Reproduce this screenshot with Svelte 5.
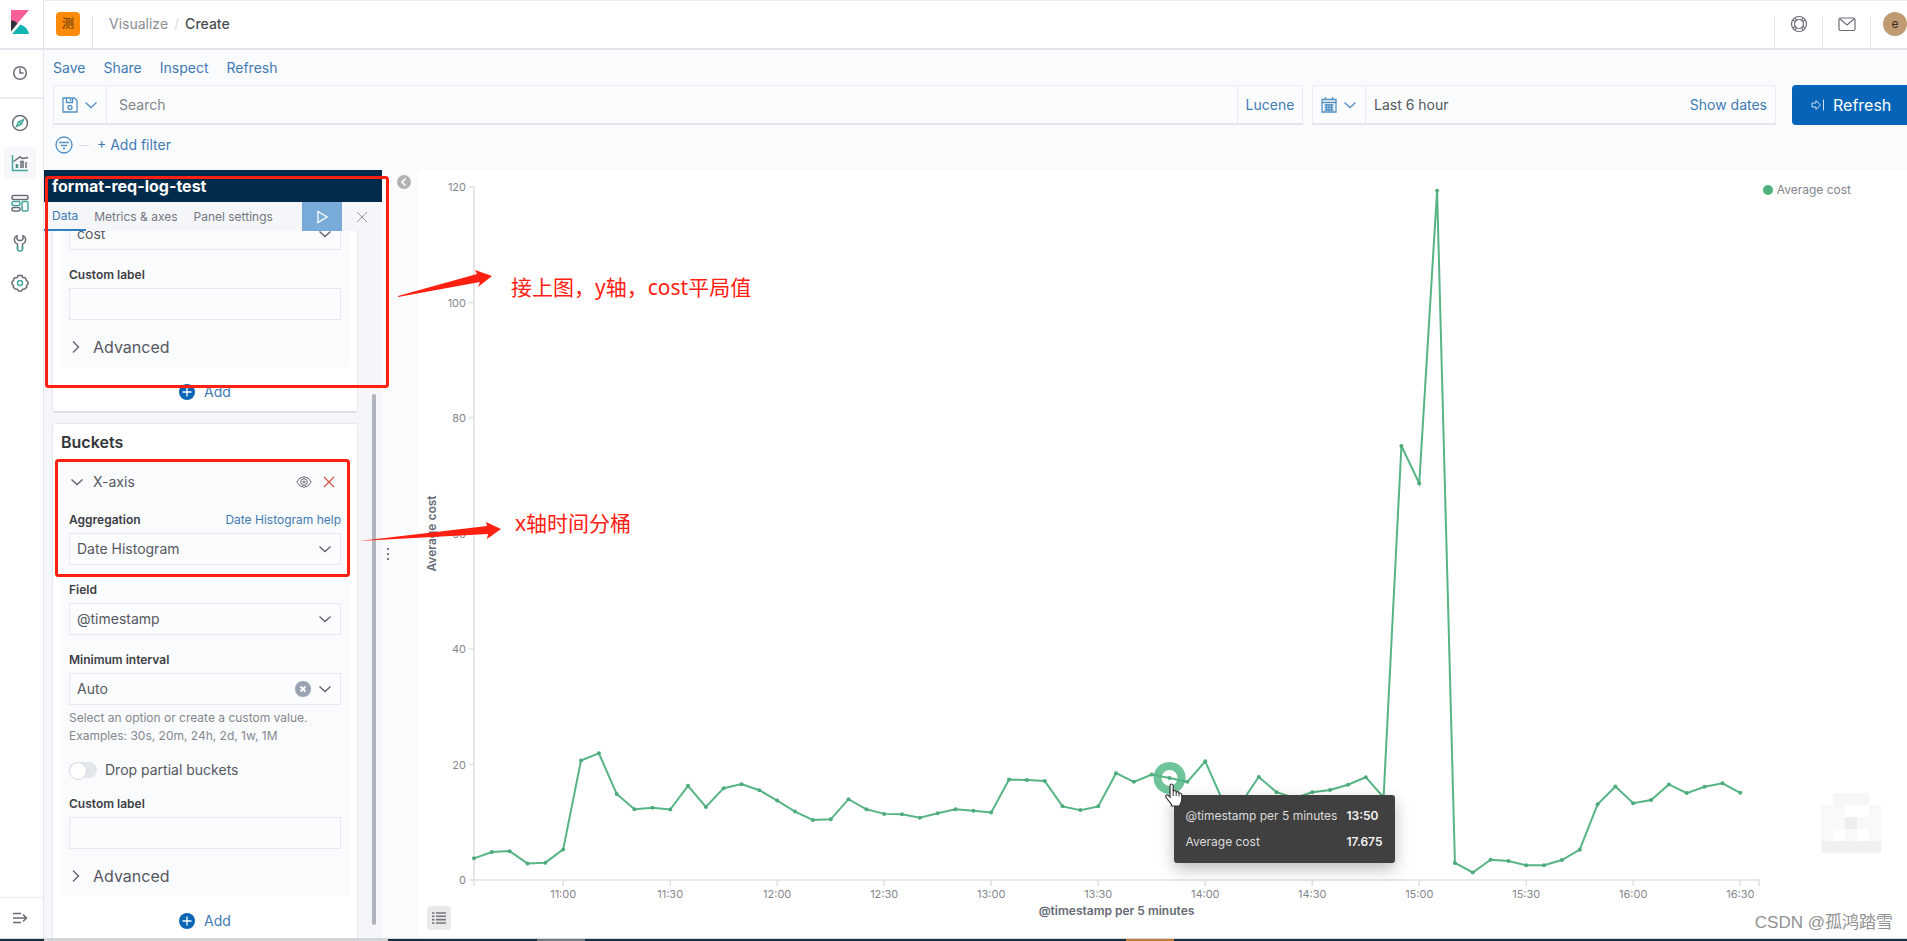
<script>
    const values = [
        3.75, 4.85, 5, 2.85, 3, 5.3, 20.7, 21.95, 14.9, 12.25, 12.5, 12.2,
        16.3, 12.65, 15.9, 16.6, 15.55, 13.75, 11.85, 10.4, 10.5, 14, 12.25,
        11.45, 11.4, 10.8, 11.55, 12.25, 12, 11.7, 17.4, 17.3, 17.15, 12.75,
        12.1, 12.75, 18.5, 17, 18.25, 17.675, 17, 20.55, 13.6, 13.3, 17.85,
        15.2, 14.2, 15.2, 15.6, 16.5, 17.8, 14.3, 75.15, 68.7, 119.35, 2.95,
        1.3, 3.5, 3.3, 2.55, 2.55, 3.45, 5.25, 13.1, 16.2, 13.3, 13.85, 16.55,
        15.05, 16.15, 16.75, 15.1
    ];
    const times = [
        '11:00', '11:30', '12:00', '12:30', '13:00', '13:30',
        '14:00', '14:30', '15:00', '15:30', '16:00', '16:30'
    ];
    const yTicks = [0, 20, 40, 60, 80, 100, 120];
    const hovered = 39;
    const left = 56;
    const top = 17;

    let width = 1489;
    let height = 768;
    let tab = 'Data';
    let search = '';
    let dropPartial = false;

    $: right = width - 148;
    $: bottom = height - 58;
    $: step = (right - left) / (values.length + 0.05);
    $: x = (i) => left + i * step;
    $: y = (v) => bottom - (v / 120) * (bottom - top);
    $: line = values.map((v, i) => `${x(i)},${y(v)}`).join(' ');
</script>

{#snippet chevron()}
    <svg class="chevron" width="14" height="14" viewBox="0 0 14 14"><path d="M1.5 4.5 7 9.5l5.5-5" /></svg>
{/snippet}

{#snippet arrowRight()}
    <svg class="chevron" width="14" height="14" viewBox="0 0 14 14"><path d="M4 1.5 9.5 7 4 12.500" /></svg>
{/snippet}

{#snippet addButton()}
    <button class="add">
        <svg width="16" height="16" viewBox="0 0 16 16">
            <circle cx="8" cy="8" r="8" fill="#0a66b5" />
            <path d="M8 3.500v9M3.500 8h9" stroke="#fff" stroke-width="1.300" />
        </svg>
        Add
    </button>
{/snippet}

<div class="page">
    <nav class="rail" aria-label="Main">
        <a class="logo" href="#home" aria-label="Kibana">
            <svg width="18" height="24" viewBox="0 0 18 24">
                <path d="M0 0h18L5.500 14.500A14 14 0 0 0 0 10z" fill="#fa5f99" />
                <path d="M0 10a14 14 0 0 1 6.500 3.500L0 21.500z" fill="#32323c" />
                <path d="M1 24 9.500 14.500A13 13 0 0 1 18 24z" fill="#10b5b1" />
            </svg>
        </a>
        <a class="recent" href="#recent" aria-label="Recently viewed">
            <svg width="16" height="16" viewBox="0 0 16 16"><circle cx="8" cy="8" r="6.300" /><path d="M8 3.500V8h3.500" /></svg>
        </a>
        <div class="apps">
            <a href="#discover" aria-label="Discover">
                <svg width="18" height="18" viewBox="0 0 18 18"><circle cx="9" cy="9" r="7.500" /><path class="teal" d="M12.500 5.500 10.500 10 5.500 12.500 7.500 8z" /><path class="teal" d="m7.500 8 3 2" /></svg>
            </a>
            <a class="current" href="#visualize" aria-label="Visualize">
                <svg width="18" height="18" viewBox="0 0 18 18"><path class="teal" d="M1.500 1v15.500H17" /><path d="M2.500 7.500 9 3l2.500 1.500L17 3.500M5.500 14v-4M10 14V7.500h2V14M15 14V8" /><path class="teal" d="M6.500 14v-3.500" /></svg>
            </a>
            <a href="#dashboard" aria-label="Dashboard">
                <svg width="18" height="18" viewBox="0 0 18 18"><rect x="1" y="1.500" width="16" height="4" rx="1.500" /><rect class="teal" x="1" y="7.500" width="8" height="4" rx="1.500" /><rect x="1" y="13.500" width="8" height="3.500" rx="1.500" /><rect class="teal" x="11" y="7.500" width="6" height="9.500" rx="1.500" /></svg>
            </a>
            <a href="#devtools" aria-label="Dev Tools">
                <svg width="18" height="18" viewBox="0 0 18 18"><path d="M6.500 15.500V10C4 9 3 7 3.500 4.500 4 3 5 2 6 1.700V5l1.500 1.500h3L12 5V1.700c1 .3 2 1.300 2.500 2.800C15 7 14 9 11.500 10v5.500" /><path class="teal" d="M6.500 12v3q0 2 2.500 2t2.500-2v-3" /></svg>
            </a>
            <a href="#management" aria-label="Management">
                <svg width="18" height="18" viewBox="0 0 18 18"><path d="m7 1.500h4l.5 2 1.500 0 1.500.5 1 2.500L17 8v2l-1.500 1.500.2 1.500-1.700 2-2.500.2L10.500 17h-3L6.500 15.200 4 15l-1.700-2 .2-1.500L1 10V8l1.500-1.500.5-2 1-.8 2.500-.2z" /><circle class="teal" cx="9" cy="9" r="2.500" /></svg>
            </a>
        </div>
        <button class="collapse" aria-label="Expand navigation">
            <svg width="16" height="14" viewBox="0 0 16 14"><path d="M1 2.500h8M1 7h13M1 11.500h8M11 3.500 14.500 7 11 10.500" /></svg>
        </button>
    </nav>

    <div class="main">
        <header>
            <div class="space"><span>测</span></div>
            <div class="crumbs"><a href="#visualize">Visualize</a><i>/</i><b>Create</b></div>
            <button class="head-icon" aria-label="Help">
                <svg width="18" height="18" viewBox="0 0 18 18"><circle cx="9" cy="9" r="7.500" /><circle cx="9" cy="9" r="4.500" /><path d="m3 5 3 2M5 3l2 3M15 5l-3 2M13 3l-2 3M3 13l3-2M5 15l2-3M15 13l-3-2M13 15l-2-3" /></svg>
            </button>
            <button class="head-icon" aria-label="News">
                <svg width="18" height="18" viewBox="0 0 18 18"><rect x="1" y="3" width="16" height="12.500" rx="1.500" /><path d="m2 4 7 6 7-6" /></svg>
            </button>
            <button class="head-icon user" aria-label="Account"><span>e</span></button>
        </header>

        <div class="top">
            <div class="menu">
                <a href="#save">Save</a>
                <a href="#share">Share</a>
                <a href="#inspect">Inspect</a>
                <a href="#refresh">Refresh</a>
            </div>
            <div class="query">
                <div class="box grow">
                    <button class="pick" aria-label="Saved queries">
                        <svg width="16" height="16" viewBox="0 0 16 16"><path d="M1 1h11.500L15 3.500V15H1zM4.500 1v4.500h6V1M8.500 2v2" /><circle cx="8" cy="10.500" r="2" /></svg>
                        {@render chevron()}
                    </button>
                    <input class="search" aria-label="Search" placeholder="Search" bind:value={search} />
                    <button class="lang">Lucene</button>
                </div>
                <div class="box date">
                    <button class="pick" aria-label="Quick dates">
                        <svg width="16" height="16" viewBox="0 0 16 16"><path d="M1 2.500h14V15H1zM1 5.500h14M4.500 0v3M11.500 0v3M3.500 8h9M3.500 10.500h9M3.500 13h9M5.500 7v7M8 7v7M10.500 7v7" /></svg>
                        {@render chevron()}
                    </button>
                    <button class="range">Last 6 hour</button>
                    <button class="dates">Show dates</button>
                </div>
                <button class="refresh">
                    <svg width="14" height="14" viewBox="0 0 14 14"><path d="M1 5h4V2.500L9.500 7 5 11.500V9H1zM12.500 1.500v11" /></svg>
                    Refresh
                </button>
            </div>
            <div class="filters">
                <svg width="18" height="18" viewBox="0 0 18 18"><circle cx="9" cy="9" r="8" /><path d="M4 6.500h10M6 9.500h6M8 12.500h2" /></svg>
                <span class="dash"></span>
                <button>+ Add filter</button>
            </div>
        </div>

        <div class="work">
            <aside>
                <h2>format-req-log-test</h2>
                <div class="tabs">
                    {#each ['Data', 'Metrics & axes', 'Panel settings'] as name}
                        <button class:active={tab == name} on:click={() => (tab = name)}>{name}</button>
                    {/each}
                    <button class="apply" aria-label="Apply changes">
                        <svg width="14" height="14" viewBox="0 0 14 14"><path d="M3 1.500 12 7l-9 5.500z" /></svg>
                    </button>
                    <button class="discard" aria-label="Discard changes">
                        <svg width="12" height="12" viewBox="0 0 12 12"><path d="m1 1 10 10M11 1 1 11" /></svg>
                    </button>
                </div>

                <div class="scroller">
                    <div class="cards">
                        <div class="card">
                            <div class="agg">
                                <div class="select">
                                    <select aria-label="Metric field"><option>cost</option></select>
                                    {@render chevron()}
                                </div>
                                <label for="metric-label">Custom label</label>
                                <input id="metric-label" class="text" />
                                <button class="advanced">{@render arrowRight()}Advanced</button>
                            </div>
                            {@render addButton()}
                        </div>

                        <div class="card">
                            <h3>Buckets</h3>
                            <div class="agg">
                                <div class="agg-head">
                                    <button class="axis">{@render chevron()}X-axis</button>
                                    <button aria-label="Disable aggregation">
                                        <svg class="eye" width="16" height="14" viewBox="0 0 16 14"><path d="M.8 7Q3.500 1.800 8 1.800T15.200 7Q12.500 12.200 8 12.200T.8 7z" /><circle cx="8" cy="7" r="3.300" /><circle cx="8" cy="7" r="1" /></svg>
                                    </button>
                                    <button aria-label="Remove aggregation">
                                        <svg class="remove" width="12" height="12" viewBox="0 0 12 12"><path d="m1 1 10 10M11 1 1 11" /></svg>
                                    </button>
                                </div>
                                <div class="label-row">
                                    <label for="agg">Aggregation</label>
                                    <a href="#help">Date Histogram help</a>
                                </div>
                                <div class="select">
                                    <select id="agg"><option>Date Histogram</option></select>
                                    {@render chevron()}
                                </div>
                                <label for="field">Field</label>
                                <div class="select">
                                    <select id="field"><option>@timestamp</option></select>
                                    {@render chevron()}
                                </div>
                                <label for="interval">Minimum interval</label>
                                <div class="select">
                                    <select id="interval"><option>Auto</option></select>
                                    <button class="clear" aria-label="Clear interval">
                                        <svg width="16" height="16" viewBox="0 0 16 16"><circle cx="8" cy="8" r="8" fill="#98a2b3" /><path d="m5.500 5.500 5 5m0-5-5 5" stroke="#fff" stroke-width="1.800" /></svg>
                                    </button>
                                    {@render chevron()}
                                </div>
                                <p>Select an option or create a custom value.<br />Examples: 30s, 20m, 24h, 2d, 1w, 1M</p>
                                <label class="switch">
                                    <input type="checkbox" bind:checked={dropPartial} />
                                    Drop partial buckets
                                </label>
                                <label for="bucket-label">Custom label</label>
                                <input id="bucket-label" class="text" />
                                <button class="advanced">{@render arrowRight()}Advanced</button>
                            </div>
                            {@render addButton()}
                        </div>
                    </div>
                    <div class="thumb"></div>
                </div>
            </aside>

            <div class="gutter">
                <button aria-label="Hide editor">
                    <svg width="14" height="14" viewBox="0 0 14 14"><circle cx="7" cy="7" r="7" fill="#b3b3b6" /><path d="M8.500 3.500 5 7l3.500 3.500" fill="none" stroke="#fff" stroke-width="1.600" /></svg>
                </button>
                <span class="grip"></span>
            </div>

            <div class="chart" bind:clientWidth={width} bind:clientHeight={height}>
                <svg class="plot" {width} {height}>
                    <g class="axes">
                        <path d="M{left} {top}V{bottom + 6}M{left} {bottom}H{right}v6" />
                        {#each yTicks as t}
                            <path d="M{left - 5} {y(t)}h5" />
                            <text x={left - 8} y={y(t) + 4} text-anchor="end">{t}</text>
                        {/each}
                        {#each times as t, i}
                            <path d="M{x(5 + i * 6)} {bottom}v6" />
                            <text x={x(5 + i * 6)} y={bottom + 18} text-anchor="middle">{t}</text>
                        {/each}
                    </g>
                    <text class="title" x={(left + right) / 2} y={bottom + 35}>@timestamp per 5 minutes</text>
                    <text class="title" transform="translate(18 {(top + bottom) / 2}) rotate(-90)">Average cost</text>
                    <circle class="halo" cx={x(hovered)} cy={y(values[hovered])} r="12" />
                    <polyline points={line} />
                    {#each values as v, i}
                        <circle class="dot" cx={x(i)} cy={y(v)} r="2" />
                    {/each}
                </svg>

                <div class="legend"><span></span>Average cost</div>
                <button class="list" aria-label="Toggle legend">
                    <svg width="14" height="14" viewBox="0 0 14 14"><path d="M0 2h2.500M0 5.300h2.500M0 8.600h2.500M0 12h2.500M4 2h10M4 5.300h10M4 8.600h10M4 12h10" /></svg>
                </button>

                <div class="tip" style="left: {x(hovered) + 4}px; top: {y(values[hovered]) + 17}px">
                    <table>
                        <tbody>
                            <tr><td>@timestamp per 5 minutes</td><th>13:50</th></tr>
                            <tr><td>Average cost</td><th>17.675</th></tr>
                        </tbody>
                    </table>
                </div>
                <svg class="hand" style="left: {x(hovered) - 6}px; top: {y(values[hovered]) + 5}px" width="20" height="24" viewBox="0 0 20 24">
                    <path d="M6 14V3q0-2 1.500-2T9.200 3v6q.2-1.500 1.500-1.500T12.200 9v1q.2-1.300 1.400-1.300T15 10v1q.2-1 1.300-1 1.500 0 1.500 2v4q0 3-1.800 5.500V23H7.500v-1.500L2.500 15Q1 13 2.300 12.200q1.500-.7 2.700.8z" fill="#fff" stroke="#333" stroke-width="1.200" />
                    <path d="M9.200 9v4M12.200 10v3M15 11v2.500" stroke="#333" />
                </svg>

                <svg class="mosaic" width="60" height="60" viewBox="0 0 5 5" shape-rendering="crispEdges">
                    <path d="M0 1h5v4H0z" fill="#f9f9f9" />
                    <path d="M1 0h3v1H1z" fill="#f7f7f7" />
                    <path d="M2 1h2v1H2zM1 3h1v1H1zM3 3h1v1H3z" fill="#fff" />
                    <path d="M2 2h1v1H2z" fill="#eee" />
                    <path d="M0 4h5v1H0z" fill="#f1f1f1" />
                </svg>
                <div class="credit">CSDN @孤鸿踏雪</div>
            </div>
        </div>
    </div>

    <footer><span class="edge"></span><span class="app"></span><span class="alert"></span></footer>

    <svg class="marks">
        <rect x="46.500" y="177.500" width="341" height="209" rx="2" />
        <rect x="56.500" y="460.500" width="292" height="115" rx="2" />
        <path d="m398 296 79-22-2-4 17 6-14 11 2-5-82 15z" />
        <path d="m359 541 128-15-1-4 15 7-14 10 1-5z" />
    </svg>
    <div class="note one">接上图，y轴，cost平局值</div>
    <div class="note two">x轴时间分桶</div>
</div>

<style>
    :global(body) {
        overflow: hidden;
    }

    .page {
        position: relative;
        display: grid;
        grid-template: minmax(0, 1fr) 3px / 44px minmax(0, 1fr);
        height: 100vh;
        overflow: hidden;
        background: #fafbfd;
        color: #55585f;
        font: 14px/20px Inter, "Noto Sans CJK SC", sans-serif;
    }

    .page :global(*) {
        box-sizing: border-box;
    }

    button,
    input,
    select {
        margin: 0;
        padding: 0;
        border: 0;
        background: none;
        color: inherit;
        font: inherit;
    }

    button {
        cursor: pointer;
    }

    a {
        color: #3f7ab3;
        text-decoration: none;
    }

    svg {
        display: block;
        flex: none;
        fill: none;
        stroke: none;
    }

    .rail {
        display: flex;
        flex-direction: column;
        border-right: 1px solid #e3e6ec;
        background: #fff;
    }

    .rail a,
    .collapse {
        display: flex;
        align-items: center;
        justify-content: center;
        width: 32px;
        height: 32px;
    }

    .rail a:not(.logo) svg,
    .collapse svg,
    .head-icon svg {
        stroke: #6a6d75;
        stroke-width: 1.5;
    }

    .rail a .teal {
        stroke: #45a69e;
    }

    .rail .logo {
        width: 43px;
        height: 50px;
        padding-right: 3px;
        padding-bottom: 4px;
        border-bottom: 2px solid #e3e6ec;
    }

    .rail .recent {
        width: 43px;
        height: 49px;
        padding-right: 4px;
        padding-bottom: 2px;
        border-bottom: 2px solid #e8ebf0;
    }

    .apps {
        display: flex;
        flex: 1;
        flex-direction: column;
        gap: 8px;
        padding: 8px 4px;
    }

    .apps .current {
        border-radius: 4px;
        background: #f5f7fa;
    }

    .collapse {
        width: 43px;
        height: 41px;
        padding-right: 3px;
        border-top: 1px solid #e9ebef;
    }

    .main {
        display: flex;
        flex-direction: column;
        min-width: 0;
    }

    header {
        display: flex;
        align-items: flex-end;
        height: 50px;
        border-top: 1px solid #eee;
        border-bottom: 2px solid #dfe2e8;
        background: #fff;
    }

    .space,
    .head-icon {
        display: flex;
        justify-content: center;
        width: 48px;
        height: 32px;
        border-right: 1px solid #e3e6ec;
    }

    .space {
        width: 49px;
    }

    .space span,
    .user span {
        width: 24px;
        height: 24px;
        margin-top: -4px;
        border-radius: 4px;
        background: #fd8b0b;
        color: #5a3205;
        font-size: 12px;
        line-height: 24px;
        text-align: center;
    }

    .crumbs {
        display: flex;
        flex: 1;
        gap: 6px;
        height: 34px;
        padding-left: 16px;
        color: #8b8d93;
    }

    .crumbs a {
        color: inherit;
    }

    .crumbs i {
        color: #dadce0;
        font-style: normal;
    }

    .crumbs b {
        color: #4b4d52;
        font-weight: 500;
    }

    .head-icon {
        border-right: 0;
        border-left: 1px solid #e3e6ec;
    }

    .head-icon svg {
        margin-top: -1px;
        stroke-width: 1.2;
    }

    .head-icon.user {
        width: 37px;
        justify-content: flex-end;
    }

    .user span {
        border-radius: 50%;
        background: #bf9a72;
        color: #3b2c1e;
    }

    .top {
        padding: 8px 0 0 9px;
    }

    .menu {
        display: flex;
        gap: 18px;
    }

    .query {
        display: flex;
        height: 40px;
        margin-top: 7px;
    }

    .box {
        display: flex;
        border: 1px solid #e9ecf1;
        border-bottom: 2px solid #e2e5ea;
        background: #fbfcfd;
    }

    .grow {
        flex: 1;
        margin-right: 9px;
    }

    .pick {
        display: flex;
        align-items: center;
        justify-content: center;
        gap: 6px;
        width: 53px;
        border-right: 1px solid #e6e9ef;
    }

    .pick svg {
        stroke: #5290c4;
        stroke-width: 1.3;
    }

    .search {
        flex: 1;
        min-width: 0;
        padding: 0 12px;
        outline: none;
    }

    .search::placeholder {
        color: #828489;
        opacity: 1;
    }

    .lang {
        width: 65px;
        border-left: 1px solid #e6e9ef;
        color: #3f7ab3;
    }

    .date {
        width: 464px;
        margin-right: 16px;
    }

    .range {
        flex: 1;
        padding-left: 8px;
        text-align: left;
    }

    .dates {
        padding-right: 8px;
        color: #3f7ab3;
    }

    .refresh {
        display: flex;
        align-items: center;
        gap: 8px;
        width: 115px;
        padding-left: 19px;
        border-radius: 4px 0 0 4px;
        background: #0664b8;
        color: #fff;
        font-size: 16px;
    }

    .refresh svg {
        stroke: #cfe1f2;
    }

    .filters {
        display: flex;
        align-items: center;
        height: 40px;
        padding-left: 2px;
        color: #3f7ab3;
    }

    .filters svg {
        stroke: #5290c4;
        stroke-width: 1.3;
    }

    .dash {
        width: 10px;
        margin: 0 8px 0 6px;
        border-top: 1px solid #d8dce3;
    }

    .work {
        display: flex;
        flex: 1;
        min-height: 0;
        margin-top: 5px;
    }

    aside {
        display: flex;
        flex-direction: column;
        width: 338px;
        background: #f4f6fa;
    }

    h2 {
        height: 32px;
        margin: 0;
        padding-left: 8px;
        background: #022a4a;
        color: #fff;
        font-size: 16px;
        font-weight: 700;
        line-height: 32px;
    }

    .tabs {
        display: flex;
        height: 29px;
        color: #75777e;
        font-size: 12px;
    }

    .tabs button {
        padding: 0 8px;
    }

    .tabs .active {
        border-bottom: 2px solid #2f7fc1;
        color: #3f7ab3;
    }

    .tabs .apply {
        display: flex;
        align-items: center;
        justify-content: center;
        width: 40px;
        margin-left: auto;
        background: #79abd9;
    }

    .apply svg {
        stroke: #fff;
        stroke-width: 1.3;
    }

    .tabs .discard {
        padding: 0 14px;
    }

    .discard svg {
        stroke: #999ba2;
    }

    .scroller {
        position: relative;
        flex: 1;
        min-height: 0;
        padding: 0 24px 0 8px;
        overflow: hidden;
    }

    /* the list is scrolled part of the way into the first card */
    .cards {
        margin-top: -26px;
    }

    .thumb {
        position: absolute;
        top: 23%;
        right: 6px;
        bottom: 13px;
        width: 4px;
        border-radius: 2px;
        background: #b1b3bc;
    }

    .card {
        margin-bottom: 10px;
        padding: 0 8px 5px;
        border: 1px solid #e6e9ef;
        border-bottom: 2px solid #dde0e7;
        border-radius: 4px;
        background: #fff;
    }

    h3 {
        margin: 0;
        padding: 8px 0;
        color: #33353b;
        font-size: 16px;
        font-weight: 600;
    }

    .agg {
        padding: 8px;
        background: #fafbfd;
    }

    .agg-head {
        display: flex;
        align-items: center;
        gap: 11px;
        height: 27px;
        padding-right: 6px;
    }

    .axis {
        display: flex;
        flex: 1;
        align-items: center;
        gap: 9px;
        padding-left: 1px;
    }

    .chevron {
        stroke: #62656c;
        stroke-width: 1.4;
    }

    .pick .chevron {
        stroke: #5290c4;
    }

    .eye {
        stroke: #62656c;
    }

    .remove {
        stroke: #cf5449;
        stroke-width: 1.2;
    }

    .agg label:not(.switch) {
        display: block;
        margin-top: 16px;
        color: #3c3e45;
        font-size: 12px;
        font-weight: 600;
        line-height: 18px;
    }

    .label-row {
        display: flex;
        align-items: flex-end;
        justify-content: space-between;
        font-size: 12px;
        line-height: 18px;
    }

    .select {
        position: relative;
        display: flex;
        align-items: center;
        height: 32px;
        margin-top: 4px;
        border: 1px solid #e6e9ee;
        background: #fbfcfd;
    }

    select {
        flex: 1;
        height: 30px;
        padding-left: 7px;
        appearance: none;
    }

    .select > .chevron {
        position: absolute;
        right: 8px;
        pointer-events: none;
    }

    .clear {
        position: absolute;
        right: 29px;
    }

    .text {
        display: block;
        width: 100%;
        height: 32px;
        margin-top: 4px;
        padding: 0 8px;
        border: 1px solid #e6e9ee;
        background: #fbfcfd;
    }

    p {
        margin: 4px 0 0;
        color: #85878e;
        font-size: 12px;
        line-height: 18px;
    }

    .switch {
        display: flex;
        align-items: center;
        gap: 8px;
        margin-top: 16px;
        line-height: 18px;
    }

    .switch input {
        width: 28px;
        height: 16px;
        border-radius: 8px;
        appearance: none;
        background: #e3e6eb;
    }

    .switch input::before {
        content: "";
        display: block;
        width: 16px;
        height: 16px;
        border: 1px solid #d5d8df;
        border-radius: 50%;
        background: #fff;
    }

    .switch input:checked::before {
        margin-left: 12px;
    }

    .advanced {
        display: flex;
        align-items: center;
        gap: 10px;
        height: 24px;
        margin-top: 15px;
        font-size: 16px;
    }

    .add {
        display: flex;
        align-items: center;
        gap: 9px;
        margin: 15px auto 0;
        padding-bottom: 4px;
        color: #3f7ab3;
    }

    .gutter {
        display: grid;
        grid-template: auto 1fr / 1fr;
        width: 36px;
        padding: 5px 7px 20px 5px;
    }

    .gutter button {
        justify-self: end;
    }

    .grip {
        align-self: center;
        width: 2px;
        height: 12px;
        background: repeating-linear-gradient(#777a82 0 2px, transparent 2px 5px);
    }

    .chart {
        position: relative;
        flex: 1;
        min-width: 0;
        background: #fff;
    }

    .plot {
        position: absolute;
    }

    .axes {
        fill: #85878e;
        font-size: 11px;
    }

    .axes path {
        fill: none;
        stroke: #dfe0e3;
        stroke-width: 1.5;
    }

    .title {
        fill: #666a76;
        font-size: 12px;
        font-weight: 600;
        text-anchor: middle;
    }

    polyline {
        stroke: #57b585;
        stroke-width: 2;
    }

    .dot {
        fill: #4fab7b;
    }

    .halo {
        stroke: #6fc499;
        stroke-width: 8;
    }

    .legend {
        position: absolute;
        top: 10px;
        right: 56px;
        display: flex;
        align-items: center;
        gap: 4px;
        color: #82848b;
        font-size: 12px;
    }

    .legend span {
        width: 10px;
        height: 10px;
        border-radius: 50%;
        background: #4fb27e;
    }

    .list {
        position: absolute;
        bottom: 8px;
        left: 9px;
        display: flex;
        align-items: center;
        justify-content: center;
        width: 24px;
        height: 24px;
        border-radius: 3px;
        background: #eaeaeb;
    }

    .list svg {
        stroke: #74777d;
        stroke-width: 1.6;
    }

    .tip {
        position: absolute;
        padding: 8px 11px 8px 10px;
        border-radius: 3px;
        background: #404040;
        box-shadow: 0 6px 16px #0004;
        color: #dcdcdc;
        font-size: 12px;
        white-space: nowrap;
    }

    table {
        border-spacing: 0;
    }

    td,
    th {
        height: 26px;
        padding: 0 2px;
        text-align: left;
    }

    th {
        padding-left: 7px;
        color: #f3f3f3;
        font-weight: 600;
    }

    .hand {
        position: absolute;
    }

    .mosaic {
        position: absolute;
        right: 26px;
        bottom: 85px;
    }

    .credit {
        position: absolute;
        right: 14px;
        bottom: 2px;
        color: #909193;
        font: 17px/26px "Liberation Sans", "Noto Sans CJK SC", sans-serif;
    }

    footer {
        display: flex;
        grid-column: 1 / -1;
        border-top: 1px solid #d5d8db;
        background: #16303f;
    }

    .edge {
        width: 344px;
        margin-left: 44px;
        background: #d3d3d3;
    }

    .app {
        width: 48px;
        margin-left: 149px;
        background: #6d7a83;
    }

    .alert {
        width: 48px;
        margin-left: 541px;
        background: #c27a2c;
    }

    .marks {
        position: absolute;
        width: 100%;
        height: 100%;
        pointer-events: none;
    }

    .marks rect {
        stroke: #ff2012;
        stroke-width: 3;
    }

    .marks path {
        fill: #ff2012;
    }

    .note {
        position: absolute;
        color: #ff2012;
        font: 21px/28px "Noto Sans", "Noto Sans CJK SC", sans-serif;
    }

    .one {
        top: 273px;
        left: 511px;
    }

    .two {
        top: 509px;
        left: 515px;
    }
</style>
